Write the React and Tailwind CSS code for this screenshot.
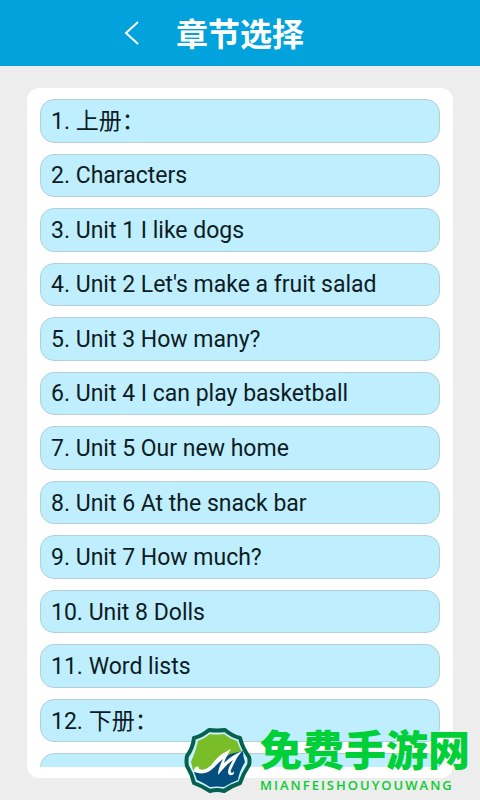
const chapters = [
  '上册：',
  'Characters',
  'Unit 1 I like dogs',
  "Unit 2 Let's make a fruit salad",
  'Unit 3 How many?',
  'Unit 4 I can play basketball',
  'Unit 5 Our new home',
  'Unit 6 At the snack bar',
  'Unit 7 How much?',
  'Unit 8 Dolls',
  'Word lists',
  '下册：',
]

function ChapterButton({ number, title }) {
  return (
    <button
      type="button"
      className="flex w-full items-center rounded-[14px] border border-[#b4cfd8] bg-[#bfeeff] px-[10px] pt-[2px] text-left text-[23px] leading-6 text-[#0c1c22]"
    >
      {number}. {title}
    </button>
  )
}

function BackIcon() {
  return (
    <svg
      viewBox="0 0 16 24"
      className="h-6 w-4"
      fill="none"
      stroke="currentColor"
      strokeWidth="2"
      aria-hidden="true"
    >
      <path d="M14 1 L2 12 L14 23" />
    </svg>
  )
}

// ── Site badge ────────────────────────────────────────────────────────────────

function SiteLogo() {
  return (
    <svg viewBox="0 0 80 80" className="size-20 shrink-0" aria-hidden="true">
      <path
        d="M29 10 Q37 11 45 10 Q52 16 60 18 Q63 29 69 37 Q70 41 69 45 Q63 54 60 63 Q51 66 44 71 Q37 69 30 71 Q22 66 14 63 Q12 54 7 46 Q6 41 7 36 Q13 28 14 18 Q22 16 29 10 Z"
        fill="#c8f1fb"
        stroke="#05604f"
        strokeWidth="4"
        strokeLinejoin="round"
      />
      {/* sky */}
      <path
        d="M30 14 Q37 15 44 14 Q50 19 57 21 Q59 27 62 32 L48 42 L30 54 L13 50 Q12 45 11 42 Q16 31 18 21 Q24 19 30 14 Z"
        fill="#79bd28"
      />
      {/* sea */}
      <path
        d="M14 52 Q27 56 37 43 L50 34 L63 31 Q63 37 65 42 Q59 52 58 60 Q50 63 44 67 Q37 66 30 67 Q24 63 17 60 Z"
        fill="#03507f"
      />
      {/* wave */}
      <path
        d="M14 50 C15 45 20 46 19 49 C24 51 29 48 33 43 C38 36 43 33 51 29 C48 34 45 39 44 43 C49 38 55 34 62 31 C57 37 54 43 51 50 C50 53 53 54 54 51 C55 56 48 57 48 52 C48 48 51 44 53 40 C47 44 43 49 38 55 C38 50 40 45 43 39 C36 44 33 51 25 53 C20 54 16 53 14 50 Z"
        fill="#fff"
      />
    </svg>
  )
}

function SiteBadge() {
  return (
    <div className="pointer-events-none absolute right-0 bottom-0 flex w-[300px] items-center">
      <SiteLogo />
      <div className="pt-1 whitespace-nowrap">
        <p className="text-[42px] leading-[42px] font-black text-[#00d038]">免费手游网</p>
        <p className="pt-1 font-['Open_Sans',sans-serif] text-[13px] leading-4 font-semibold tracking-[2px] text-[#0ccb30]">
          MIANFEISHOUYOUWANG
        </p>
      </div>
    </div>
  )
}

// ── Page ──────────────────────────────────────────────────────────────────────

export default function App() {
  return (
    <div className="relative flex h-screen flex-col overflow-hidden bg-[#ededed] font-['Roboto','Noto_Sans_CJK_SC',sans-serif]">
      <header className="grid h-[66px] shrink-0 grid-cols-[1fr_auto_1fr] items-center bg-[#02a2dc] text-white">
        <button type="button" aria-label="返回" className="mr-9 justify-self-end">
          <BackIcon />
        </button>
        <h1 className="pt-1 text-[32px] leading-10 font-bold">章节选择</h1>
      </header>

      <main className="mx-[27px] my-[22px] flex min-h-0 flex-1 flex-col rounded-xl bg-white px-[13px] py-[11px]">
        <div className="min-h-0 flex-1 overflow-hidden">
          <ol className="grid min-h-[698px] auto-rows-fr gap-[11px]">
            {chapters.map((title, i) => (
              <li key={title} className="flex">
                <ChapterButton number={i + 1} title={title} />
              </li>
            ))}
            {/* next row, still out of view below the fold */}
            <li className="rounded-[14px] border border-[#b4cfd8] bg-[#bfeeff]" />
          </ol>
        </div>
      </main>

      <SiteBadge />
    </div>
  )
}
